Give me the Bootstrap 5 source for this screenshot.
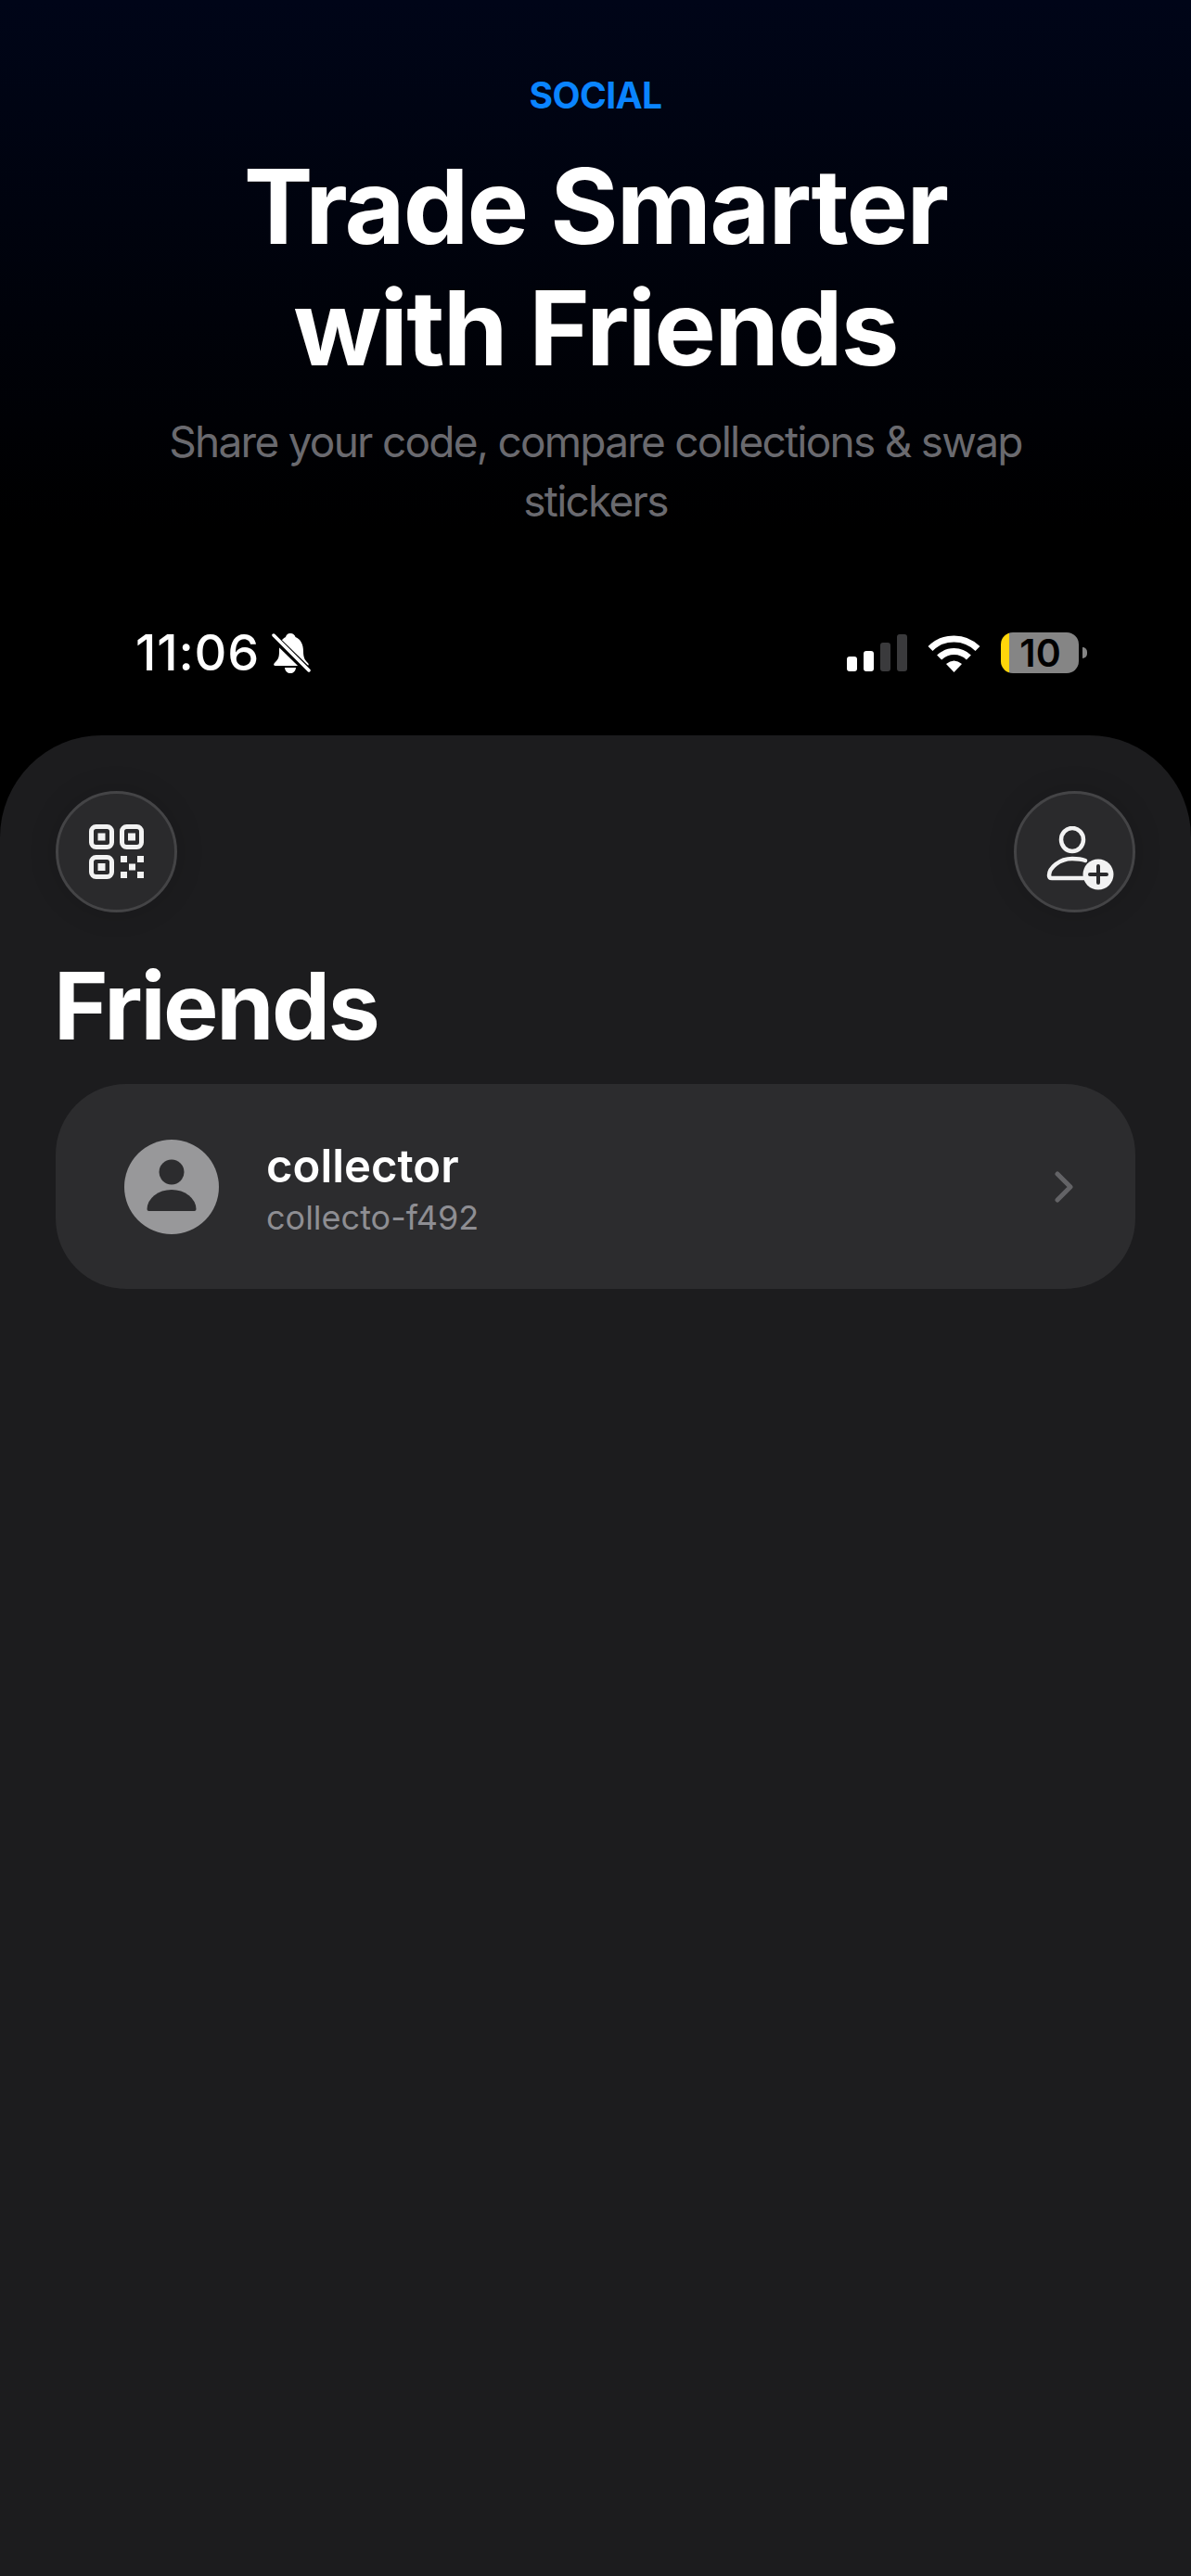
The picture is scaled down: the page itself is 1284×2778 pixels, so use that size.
<!DOCTYPE html>
<html lang="en">
<head>
    <meta charset="utf-8">
    <title>Trade Smarter with Friends</title>
    <link href="https://cdn.jsdelivr.net/npm/bootstrap@5.3.0/dist/css/bootstrap.min.css" rel="stylesheet">
    <style>
        body { background: #000; font-family: Inter, "Liberation Sans", sans-serif; min-height: 2778px; }
        .page-shell { min-height: 2778px; background: linear-gradient(180deg, #000518 0, #000 570px); }
        .hero { padding-top: 81px; }
        .eyebrow { font-size: 39px; line-height: 44px; font-weight: 700; color: #0a84ff; letter-spacing: -.6px; }
        .hero-title { font-size: 112px; line-height: 131px; font-weight: 700; color: #fff; letter-spacing: -1.8px; margin: 32px 0 25px; }
        .hero-sub { font-size: 46px; line-height: 64px; color: #6a6a6f; letter-spacing: -1.75px; width: 960px; margin: 0 auto; }
        .status-row { height: 50px; margin-top: 107px; padding: 0 112px 0 146px; color: #fff; }
        .clock { font-size: 54px; line-height: 50px; font-weight: 500; letter-spacing: .8px; }
        .bell-icon { margin-left: 13px; }
        .status-right { gap: 22px; }
        .batt-wrap { gap: 4px; }
        .batt-body { width: 84px; height: 44px; border-radius: 13px; background: linear-gradient(90deg, #ffd60a 9px, #858585 9px); color: #000; font-size: 41px; line-height: 44px; font-weight: 600; padding-left: 1px; }
        .batt-nub { width: 5px; height: 12px; background: #858585; border-radius: 0 6px 6px 0; }
        .sheet { margin-top: 64px; background: #1c1c1e; border-radius: 110px 110px 0 0; padding: 60px 60px 0; min-height: 1985px; }
        .round-btn { width: 131px; height: 131px; padding: 0; background: #2a2a2c; border: 3px solid #444446; box-shadow: 0 0 30px rgba(0, 0, 0, .15); }
        .user-add-icon { margin: 14px 0 0 12px; }
        .sheet-title { font-size: 100px; line-height: 120px; font-weight: 700; color: #fff; letter-spacing: -2.4px; margin: 41px 0 24px -2px; }
        .friend-row { height: 221px; background: #2c2c2e; border: 0; border-radius: 76px !important; padding: 0 67px 0 74px; gap: 51px; }
        .friend-text { padding-top: 7px; }
        .friend-name { font-size: 49px; line-height: 58px; font-weight: 600; color: #fff; }
        .friend-handle { font-size: 36px; line-height: 50px; color: #8e8e93; margin-top: 1px; }
    </style>
</head>
<body>
<div class="page-shell">
    <header class="hero text-center">
        <div class="eyebrow">SOCIAL</div>
        <h1 class="hero-title">Trade Smarter<br>with Friends</h1>
        <p class="hero-sub mb-0">Share your code, compare collections &amp; swap stickers</p>
    </header>

    <div class="status-row d-flex justify-content-between align-items-center">
        <div class="d-flex align-items-center">
            <span class="clock">11:06</span>
            <svg class="bell-icon" width="42" height="45" viewBox="0 0 42 45">
                <path fill="#fff" d="M20 1C23 1 25 3 25.500 5C31 7 34 13 34 20C34 28 36 30 39 33C40.500 35 39.500 36 38 36H4C2 36 1.500 34.500 3 33C7 29 8 27 8 20C8 13 10 7 15 5C15.500 3 17 1 20 1Z"/>
                <path fill="#fff" d="M14 38H26C25.500 42 23 44 20 44C17 44 14.500 42 14 38Z"/>
                <path stroke="#000" stroke-width="8" d="M0 3L41 43"/>
                <path stroke="#fff" stroke-width="3.500" stroke-linecap="round" d="M2 3L40 41"/>
            </svg>
        </div>
        <div class="status-right d-flex align-items-center">
            <svg width="65" height="40" viewBox="0 0 65 40">
                <rect x="0" y="24" width="11" height="16" rx="3" fill="#fff"/>
                <rect x="18" y="18" width="11" height="22" rx="3" fill="#fff"/>
                <rect x="36" y="9" width="11" height="31" rx="3" fill="#3a3a3c"/>
                <rect x="54" y="0" width="11" height="40" rx="3" fill="#3a3a3c"/>
            </svg>
            <svg width="57" height="41" viewBox="0 0 57 41">
                <path fill="none" stroke="#fff" stroke-width="7" d="M3 15.500A36 36 0 0 1 54 15.500"/>
                <path fill="none" stroke="#fff" stroke-width="7" d="M12.600 25.100A22.500 22.500 0 0 1 44.400 25.100"/>
                <path fill="#fff" d="M28.500 41L20 32Q28.500 25 37 32Z"/>
            </svg>
            <div class="batt-wrap d-flex align-items-center">
                <div class="batt-body text-center">10</div>
                <div class="batt-nub"></div>
            </div>
        </div>
    </div>

    <main class="sheet">
        <div class="d-flex justify-content-between">
            <button type="button" class="btn round-btn rounded-circle d-flex align-items-center justify-content-center" aria-label="QR code">
                <svg width="59" height="59" viewBox="0 0 59 59">
                    <g fill="none" stroke="#f2f2f2" stroke-width="5">
                        <rect x="2.500" y="2.500" width="22" height="22" rx="5"/>
                        <rect x="35.500" y="2.500" width="21" height="22" rx="5"/>
                        <rect x="2.500" y="35.500" width="22" height="21" rx="5"/>
                    </g>
                    <g fill="#f2f2f2">
                        <rect x="9.500" y="9.500" width="8" height="8"/>
                        <rect x="42" y="9.500" width="8" height="8"/>
                        <rect x="9.500" y="42" width="8" height="8"/>
                        <rect x="34" y="34" width="7" height="7"/>
                        <rect x="52" y="34" width="7" height="7"/>
                        <rect x="43" y="42.500" width="7" height="7"/>
                        <rect x="34" y="51" width="7" height="7"/>
                        <rect x="52" y="51" width="7" height="7"/>
                    </g>
                </svg>
            </button>
            <button type="button" class="btn round-btn rounded-circle d-flex align-items-center justify-content-center" aria-label="Add friend">
                <svg class="user-add-icon" width="73" height="69" viewBox="0 0 73 69">
                    <g fill="none" stroke="#f2f2f2" stroke-width="4.500" stroke-linecap="round">
                        <ellipse cx="28" cy="14.500" rx="12" ry="12.500"/>
                        <path d="M42 37C38 35.500 34 35 28 35C14 35 3 45 3 53Q3 56 6 56H40"/>
                    </g>
                    <circle cx="56" cy="52" r="16.500" fill="#f2f2f2"/>
                    <path stroke="#2a2a2c" stroke-width="4" stroke-linecap="round" d="M47 52H65M56 43V61"/>
                </svg>
            </button>
        </div>

        <h2 class="sheet-title">Friends</h2>

        <div class="list-group">
            <a href="#" class="list-group-item friend-row d-flex align-items-center text-decoration-none">
                <svg width="102" height="102" viewBox="0 0 102 102" class="flex-shrink-0">
                    <circle cx="51" cy="51" r="51" fill="#98989a"/>
                    <circle cx="51" cy="35" r="13.500" fill="#2c2c2e"/>
                    <path fill="#2c2c2e" d="M24.500 75A26.500 21 0 0 1 77.500 75Q77.500 77 75.500 77H26.500Q24.500 77 24.500 75Z"/>
                </svg>
                <div class="friend-text flex-grow-1">
                    <div class="friend-name">collector</div>
                    <div class="friend-handle">collecto-f492</div>
                </div>
                <svg width="20" height="34" viewBox="0 0 20 34">
                    <path fill="none" stroke="#636366" stroke-width="5" stroke-linecap="round" stroke-linejoin="round" d="M3 3L17 17L3 31"/>
                </svg>
            </a>
        </div>
    </main>
</div>
<script src="https://cdn.jsdelivr.net/npm/bootstrap@5.3.0/dist/js/bootstrap.bundle.min.js"></script>
</body>
</html>
